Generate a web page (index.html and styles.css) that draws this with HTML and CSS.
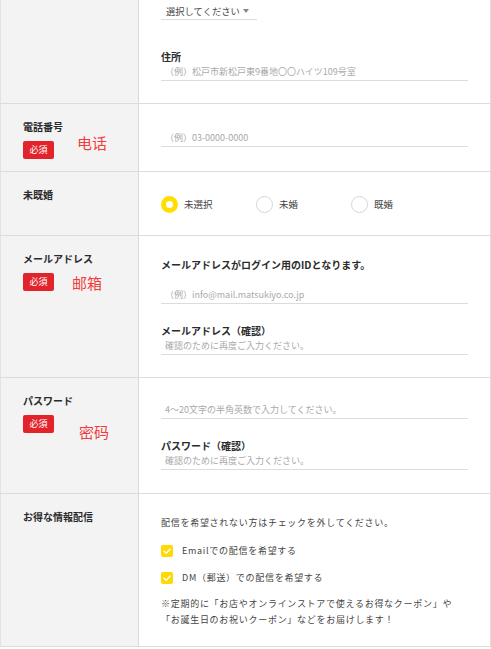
FILE: index.html
```html
<!DOCTYPE html>
<html lang="ja">
<head>
    <meta charset="UTF-8">
    <meta name="viewport" content="width=device-width, initial-scale=1.0">
    <title>会員登録</title>
    <link rel="stylesheet" href="styles.css">
</head>
<body>
<div class="form">
    <div class="row row-address">
        <div class="head"></div>
        <div class="body">
            <div class="select">選択してください<span class="arrow"></span></div>
            <p class="sub-label gap-address">住所</p>
            <div class="field">（例）松戸市新松戸東9番地〇〇ハイツ109号室</div>
        </div>
    </div>

    <div class="row row-tel">
        <div class="head">
            <p class="label">電話番号</p>
            <span class="req">必須</span>
            <span class="memo memo-tel">电话</span>
        </div>
        <div class="body">
            <div class="field">（例）03-0000-0000</div>
        </div>
    </div>

    <div class="row row-marriage">
        <div class="head">
            <p class="label">未既婚</p>
        </div>
        <div class="body">
            <div class="radios">
                <label class="radio"><span class="dot checked"></span>未選択</label>
                <label class="radio"><span class="dot"></span>未婚</label>
                <label class="radio"><span class="dot"></span>既婚</label>
            </div>
        </div>
    </div>

    <div class="row row-mail">
        <div class="head">
            <p class="label">メールアドレス</p>
            <span class="req">必須</span>
            <span class="memo memo-mail">邮箱</span>
        </div>
        <div class="body">
            <p class="sub-label">メールアドレスがログイン用のIDとなります。</p>
            <div class="field gap-mail">（例）info@mail.matsukiyo.co.jp</div>
            <p class="sub-label gap-confirm">メールアドレス（確認）</p>
            <div class="field">確認のために再度ご入力ください。</div>
        </div>
    </div>

    <div class="row row-password">
        <div class="head">
            <p class="label">パスワード</p>
            <span class="req">必須</span>
            <span class="memo memo-password">密码</span>
        </div>
        <div class="body">
            <div class="field">4～20文字の半角英数で入力してください。</div>
            <p class="sub-label gap-confirm">パスワード（確認）</p>
            <div class="field">確認のために再度ご入力ください。</div>
        </div>
    </div>

    <div class="row row-news">
        <div class="head">
            <p class="label">お得な情報配信</p>
        </div>
        <div class="body">
            <p class="text">配信を希望されない方はチェックを外してください。</p>
            <label class="check check-first">
                <span class="box"><svg width="12" height="12" viewBox="0 0 12 12"><path d="M3 6.2 L5.2 8.2 L9.2 4" fill="none" stroke="#fff" stroke-width="1.4" stroke-linecap="round" stroke-linejoin="round"/></svg></span>
                Emailでの配信を希望する
            </label>
            <label class="check">
                <span class="box"><svg width="12" height="12" viewBox="0 0 12 12"><path d="M3 6.2 L5.2 8.2 L9.2 4" fill="none" stroke="#fff" stroke-width="1.4" stroke-linecap="round" stroke-linejoin="round"/></svg></span>
                DM（郵送）での配信を希望する
            </label>
            <p class="notice">※定期的に「お店やオンラインストアで使えるお得なクーポン」や<br>「お誕生日のお祝いクーポン」などをお届けします！</p>
        </div>
    </div>
</div>
</body>
</html>
```

FILE: styles.css
```css
*, :after, :before {
    box-sizing: border-box;
}
body {
    margin: 0;
    background: #fff;
    font-family: "Noto Sans CJK JP", "Noto Sans", sans-serif;
    color: #333;
}
p {
    margin: 0;
}
.form {
    width: 491px;
    border-right: 1px solid #dcdcdc;
}
.row {
    display: flex;
    border-bottom: 1px solid #dcdcdc;
}
.head {
    position: relative;
    flex: none;
    width: 139px;
    padding: 16px 0 0 22px;
    background: #f3f3f3;
    border-left: 1px solid #e2e2e2;
    border-right: 1px solid #d9d9d9;
}
.body {
    flex: 1;
    padding: 0 22px;
}
.label,
.sub-label {
    font-size: 10px;
    line-height: 14px;
    font-weight: bold;
    color: #2b2b2b;
}
.req {
    display: inline-block;
    width: 31px;
    height: 18px;
    margin-top: 5px;
    border-radius: 2px;
    background: #e2232b;
    color: #fff;
    font-size: 9px;
    line-height: 18px;
    text-align: center;
}
.memo {
    position: absolute;
    font-family: "Noto Sans CJK SC", sans-serif;
    font-size: 15px;
    line-height: 20px;
    color: #f23c3c;
}
.memo-tel {
    left: 76px;
    top: 29px;
}
.memo-mail {
    left: 71px;
    top: 37px;
}
.memo-password {
    left: 78px;
    top: 44px;
}

.field {
    height: 17px;
    padding-left: 4px;
    border-bottom: 1px solid #dcdcdc;
    font-size: 9px;
    line-height: 16px;
    color: #a9a9a9;
    white-space: nowrap;
}
.select {
    display: flex;
    align-items: center;
    width: 96px;
    height: 17px;
    padding: 0 0 1px 5px;
    border-bottom: 1px solid #dcdcdc;
    font-size: 9.3px;
    line-height: 14px;
    color: #4a4a4a;
}
.arrow {
    margin-left: 3px;
    border-left: 3.5px solid transparent;
    border-right: 3.5px solid transparent;
    border-top: 4px solid #888;
}

/* row spacing */
.row-address .body {
    padding-top: 3px;
    padding-bottom: 22px;
}
.gap-address {
    margin-top: 30px;
}
.row-tel .body {
    padding-top: 26px;
    padding-bottom: 24px;
}
.row-marriage .body {
    padding-top: 24px;
    padding-bottom: 22px;
}
.row-mail .body {
    padding-top: 22px;
    padding-bottom: 22px;
}
.gap-mail {
    margin-top: 15px;
}
.gap-confirm {
    margin-top: 20px;
}
.row-password .body {
    padding-top: 24px;
    padding-bottom: 23px;
}
.row-news .body {
    padding-top: 22px;
    padding-bottom: 18px;
}

.radios {
    display: flex;
}
.radio {
    display: flex;
    align-items: center;
    width: 95px;
    font-size: 9.5px;
    line-height: 17px;
    color: #444;
}
.dot {
    width: 17px;
    height: 17px;
    margin-right: 6px;
    border: 1px solid #d6d6d6;
    border-radius: 50%;
    background: #fff;
}
.dot.checked {
    border: 5px solid #ffdf00;
}

.text,
.check,
.notice {
    font-size: 9px;
    letter-spacing: .08em;
    color: #444;
}
.text {
    line-height: 14px;
}
.check {
    display: flex;
    align-items: center;
    margin-top: 13px;
    line-height: 14px;
}
.check-first {
    margin-top: 14px;
}
.box {
    display: flex;
    width: 12px;
    height: 12px;
    margin-right: 9px;
    border-radius: 2px;
    background: #ffd900;
}
.notice {
    margin-top: 11px;
    line-height: 16px;
}
```
